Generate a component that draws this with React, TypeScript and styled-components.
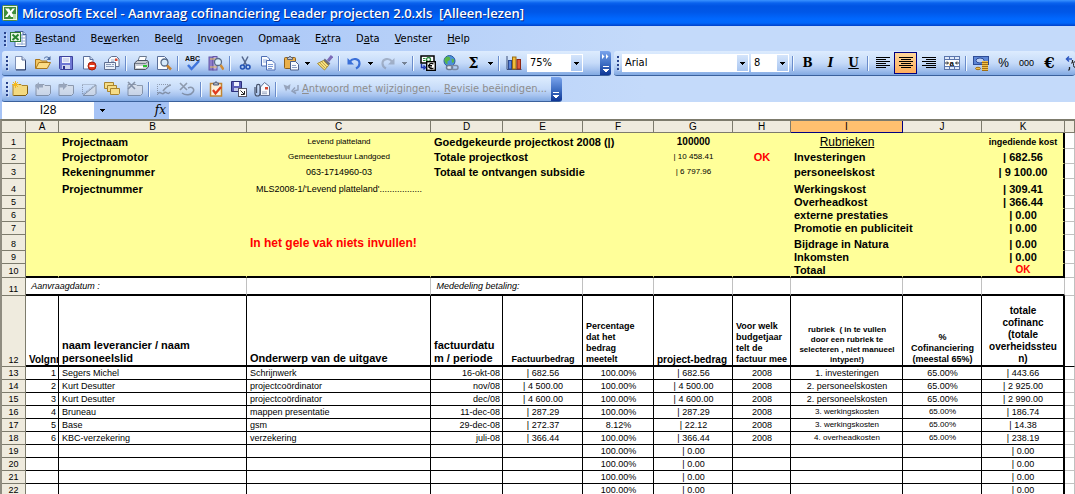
import React from "react";
import styled, { createGlobalStyle, css } from "styled-components";

const UI_FONT = '"DejaVu Sans Condensed", "DejaVu Sans", sans-serif';
const CELL_FONT = '"Liberation Sans", Arial, sans-serif';

const GlobalStyle = createGlobalStyle`
  *, *::before, *::after { box-sizing: border-box; }
  body { margin: 0; background: #fff; overflow: hidden; }
  button, input, select { font: inherit; color: inherit; margin: 0; border: 0; border-radius: 0; }
`;

/* ---------- window chrome ---------- */

const Window = styled.div`
  display: flex;
  flex-direction: column;
  height: 100vh;
  overflow: hidden;
  background: #fff;
  font-family: ${UI_FONT};
  font-size: 11px;
  color: #000;
`;

const TitleBar = styled.header`
  flex: none;
  display: flex;
  align-items: center;
  gap: 4px;
  height: 26px;
  padding: 0 2px;
  background: linear-gradient(#3a93ff 0, #0a62ee 3px, #0054e3 6px, #0057e8 12px, #0068ff 19px, #0066fa 23px, #0040c8 26px);
`;

const Title = styled.h1`
  margin: 0;
  font: 600 13px/20px "Open Sans", "Noto Sans", sans-serif;
  color: #fff;
  text-shadow: 1px 1px 0 #0b2a86;
  white-space: pre;
`;

const Chrome = styled.div`
  flex: none;
  background: linear-gradient(90deg, #9ebef5, #c4dafa 60%);
`;

const MenuBar = styled.nav`
  display: flex;
  align-items: center;
  height: 25px;
  padding-left: 4px;
`;

const MenuList = styled.ul`
  display: flex;
  gap: 15px;
  margin: 0;
  padding: 0 0 0 8px;
  list-style: none;
`;

const MenuButton = styled.button`
  padding: 0;
  background: none;
  line-height: 16px;
`;

const Grip = styled.span`
  flex: none;
  width: 2px;
  height: 14px;
  background: repeating-linear-gradient(#27418b 0 2px, transparent 2px 4px);
  box-shadow: 1px 1px 0 #ffffff60;
`;

const ToolRows = styled.div`
  display: flex;
  flex-direction: column;
  gap: 1px;
`;

const ToolRow = styled.div`
  display: flex;
  gap: 3px;
  height: 25px;
  padding-left: 2px;
`;

const Bar = styled.div<{ $grow?: boolean }>`
  flex: ${(p) => (p.$grow ? "1 0 0" : "none")};
  display: flex;
  align-items: center;
  min-width: 0;
  overflow: hidden;
  padding-left: ${(p) => (p.$grow ? 3 : 4)}px;
  border-bottom: 1px solid #3b619c;
  border-radius: 3px;
  background: linear-gradient(#ddecfe, #c6dbf9 50%, #a9c5f0 75%, #81a9e2);
`;

const ToolButton = styled.button<{ $active?: boolean; $muted?: boolean }>`
  flex: none;
  display: flex;
  align-items: center;
  justify-content: center;
  width: 23px;
  height: 22px;
  padding: 0;
  background: none;
  opacity: ${(p) => (p.$muted ? 0.6 : 1)};
  filter: ${(p) => (p.$muted ? "grayscale(0.5)" : "none")};
  ${(p) =>
    p.$active &&
    css`
      border: 1px solid #000080;
      background: linear-gradient(#ffd79b, #ffad5c);
    `}
`;

const Glyph = styled.span<{ $size: number; $italic?: boolean; $underline?: boolean; $sans?: boolean }>`
  font: ${(p) => (p.$italic ? "italic " : "")}${(p) => (p.$sans ? "normal" : "bold")} ${(p) => p.$size}px/16px
    ${(p) => (p.$sans ? '"Liberation Sans", sans-serif' : '"DejaVu Serif", "Liberation Serif", serif')};
  text-decoration: ${(p) => (p.$underline ? "underline" : "none")};
`;

const TextButton = styled.button`
  flex: none;
  padding: 0;
  background: none;
  color: #8d8d8d;
  line-height: 16px;
`;

const DropButton = styled.button<{ $muted?: boolean }>`
  flex: none;
  display: flex;
  align-items: center;
  justify-content: center;
  width: 11px;
  height: 20px;
  padding: 0;
  background: none;
  opacity: ${(p) => (p.$muted ? 0.4 : 1)};
`;

const Separator = styled.span`
  flex: none;
  width: 2px;
  height: 15px;
  margin: 0 2px;
  border-left: 1px solid #6a8ccb;
  border-right: 1px solid #f1f9ff;
`;

const ComboBox = styled.label<{ $width: number; $end?: boolean }>`
  flex: none;
  display: flex;
  width: ${(p) => p.$width}px;
  height: 18px;
  margin: 0 ${(p) => (p.$end ? 1 : 2)}px 0 0;
  border: 1px solid #fff;
  background: #fff;
`;

const ComboSelect = styled.select`
  flex: 1;
  min-width: 0;
  padding: 0 2px;
  appearance: none;
  background: #fff;
  line-height: 16px;
  outline: 0;
`;

const ComboArrow = styled.span`
  display: flex;
  align-items: center;
  justify-content: center;
  width: 11px;
  background: linear-gradient(#d5e5fb, #a9c6f1);
`;

const Overflow = styled.button`
  align-self: stretch;
  flex: none;
  display: flex;
  flex-direction: column;
  align-items: center;
  justify-content: flex-end;
  gap: 7px;
  width: 11px;
  margin-bottom: -1px;
  padding: 0 0 3px;
  background: linear-gradient(#7aa4ec, #3f6fc4 50%, #0a3191);
`;

const Gap = styled.span<{ $w: number }>`
  flex: none;
  width: ${(p) => p.$w}px;
`;

const FormulaBar = styled.div`
  flex: none;
  display: flex;
  height: 17px;
  padding-left: 2px;
  background: #a6c3f5;
`;

const NameBox = styled.input`
  width: 92px;
  padding: 0 2px;
  background: #fff;
  text-align: center;
  font: 12px/17px ${CELL_FONT};
  outline: 0;
`;

const FormulaTools = styled.div`
  display: flex;
  align-items: center;
  justify-content: space-between;
  width: 75px;
  padding: 0 3px;
`;

const FormulaInput = styled.input`
  flex: 1;
  min-width: 0;
  padding: 0 3px;
  background: #fff;
  outline: 0;
`;

const FxButton = styled.button`
  padding: 0;
  background: none;
  font: italic 12px/15px "DejaVu Serif", "Liberation Serif", serif;
`;

/* ---------- sheet ---------- */

const LINE = "#7d7b6c";
const HEAD = "#efebde";
const YELLOW = "#ffff99";
const GRID = "#c0c0c0";

const SheetArea = styled.main`
  flex: 1;
  min-height: 0;
  overflow: hidden;
  border-top: 2px solid ${LINE};
  border-left: 2px solid #8f8c80;
  font-family: ${CELL_FONT};
`;

const Sheet = styled.table`
  width: 100%;
  min-width: 1073px;
  table-layout: fixed;
  border-collapse: separate;
  border-spacing: 0;
`;

const Row = styled.tr<{ $h: number }>`
  height: ${(p) => p.$h}px;
`;

const ColHead = styled.th<{ $selected?: boolean }>`
  padding: 0;
  border-right: 1px solid ${(p) => (p.$selected ? "#000080" : LINE)};
  border-bottom: 1px solid ${(p) => (p.$selected ? "#000080" : LINE)};
  background: ${(p) => (p.$selected ? "#ffc06f" : HEAD)};
  font-size: 10px;
  line-height: 11px;
  font-weight: normal;
`;

const RowHead = styled.th`
  padding: 0;
  border-right: 1px solid ${LINE};
  border-bottom: 1px solid ${LINE};
  background: ${HEAD};
  font-size: 9px;
  line-height: 12px;
  font-weight: normal;
  vertical-align: bottom;
`;

interface CellStyle {
  $align?: "left" | "center" | "right";
  $size?: number;
  $lh?: number;
  $bold?: boolean;
  $italic?: boolean;
  $underline?: boolean;
  $red?: boolean;
  $bg?: string;
  $right?: string;
  $bottom?: string;
  $clip?: boolean;
  $middle?: boolean;
}

const Cell = styled.td<CellStyle>`
  padding: 0 2px 0 3px;
  border-right: ${(p) => p.$right ?? `1px solid ${GRID}`};
  border-bottom: ${(p) => p.$bottom ?? `1px solid ${GRID}`};
  background: ${(p) => p.$bg ?? "#fff"};
  color: ${(p) => (p.$red ? "#f00" : "#000")};
  font-size: ${(p) => p.$size ?? 9}px;
  line-height: ${(p) => p.$lh ?? 12}px;
  font-weight: ${(p) => (p.$bold ? "bold" : "normal")};
  font-style: ${(p) => (p.$italic ? "italic" : "normal")};
  text-decoration: ${(p) => (p.$underline ? "underline" : "none")};
  text-align: ${(p) => p.$align ?? "left"};
  vertical-align: ${(p) => (p.$middle ? "middle" : "bottom")};
  white-space: pre;
  overflow: ${(p) => (p.$clip ? "hidden" : "visible")};
`;

/* ---------- icons ---------- */

const Svg = ({ children, w = 16, h = 16 }: { children: React.ReactNode; w?: number; h?: number }) => (
  <svg width={w} height={h} viewBox={`0 0 ${w} ${h}`} aria-hidden="true">
    {children}
  </svg>
);

const Arrow = ({ color = "#000" }: { color?: string }) => (
  <svg width="5" height="3" viewBox="0 0 5 3" aria-hidden="true" shapeRendering="crispEdges">
    <path d="M0 0h5v1H4v1H3v1H2V2H1V1H0z" fill={color} />
  </svg>
);

const noteBody = (fill: string, edge: string) => (
  <path d="M1 3.500h8l1 1h5.500v8l-2 2H1z" fill={fill} stroke={edge} />
);

const icons: Record<string, React.ReactNode> = {
  excel: (
    <>
      <rect x=".5" y=".5" width="15" height="15" rx="1" fill="#eef6e6" stroke="#4d8a45" />
      <rect x="2" y="2" width="12" height="12" fill="#3e8c3a" />
      <path d="M3 3.500h4l1.500 2.500L10.500 3.500H13L9.700 7.700 13 12H9L7.500 9.500 5.500 12H3l3.300-4.300z" fill="#fff" />
      <path d="M11 9h3v5h-3z" fill="#b9dba8" />
    </>
  ),
  book: (
    <>
      <path d="M5 1.500h8l3 3V16.500H5z" fill="#fff" stroke="#44629c" />
      <path d="M10 5h5M10 8h5M10 11h5M7 14h8M12 4v11" stroke="#8ea9d6" />
      <path d="M13 1.500v3h3" fill="#cfdff7" stroke="#44629c" />
      <rect x=".5" y="2.500" width="10" height="9" fill="#e9f5e4" stroke="#2f7a33" />
      <path d="M2.500 4.500l6 5.500M8.500 4.500l-6 5.500" stroke="#27832f" strokeWidth="2" />
    </>
  ),
  page: (
    <>
      <path d="M3.500 1.500h6.500l3.500 3.500v9.500h-10z" fill="#fbfdff" stroke="#7d90b8" />
      <path d="M10 1.500V5h3.500" fill="#cdd9ef" stroke="#5a6f9a" />
      <path d="M13.500 5.500v9.500h-9.500" stroke="#2c3d66" fill="none" />
    </>
  ),
  open: (
    <>
      <path d="M.5 13.500v-9h4.500l1.500 1.500h5.500v3" fill="#f2c765" stroke="#a8761d" />
      <path d="M.8 13.500l3-6h11.700l-3.300 6z" fill="#fbdc86" stroke="#a8761d" />
      <path d="M9 3.500c1.500-2 3.500-2 5-.5" fill="none" stroke="#4c6a9e" />
      <path d="M15.500 1v4h-4z" fill="#4c6a9e" />
    </>
  ),
  save: (
    <>
      <path d="M1.500 1.500h13v13h-12l-1-1z" fill="#6f78d4" stroke="#3d429c" />
      <rect x="4" y="2" width="8" height="6" fill="#f1f4fd" />
      <path d="M5 4h6M5 6h6" stroke="#b3bbdf" />
      <rect x="4" y="10" width="8" height="4" fill="#cdd3ee" />
      <rect x="5" y="11" width="2" height="3" fill="#2b2f8a" />
    </>
  ),
  permission: (
    <>
      <path d="M2.500 1.500h6.500l3 3v9.500h-9.500z" fill="#fbfdff" stroke="#5a6f9a" />
      <path d="M9 1.500v3h3" fill="#cdd9ef" stroke="#5a6f9a" />
      <circle cx="11" cy="11" r="4" fill="#e2391b" stroke="#a51e0c" />
      <rect x="8.500" y="10" width="5" height="2" fill="#fff" />
    </>
  ),
  mail: (
    <>
      <path d="M4.500 8V4l3-2.500h5l2.500 2.500v7.500h-3" fill="#f7faff" stroke="#5f6f92" />
      <path d="M7 5h4M7 6.500h3" stroke="#a9b6cf" />
      <rect x="11" y="3.500" width="2.500" height="2.500" fill="#d8452c" />
      <path d="M.5 7.500h11v7H.5z" fill="#e9f0fb" stroke="#5f6f92" />
      <path d="M2 9.500h5M2 11.500h8M8 9.500h2" stroke="#8a9ab8" />
    </>
  ),
  print: (
    <>
      <path d="M5 6l1.500-4.500h7L12 6z" fill="#fff" stroke="#6b7a90" />
      <path d="M1.500 8l3-2.500h10l1 1.500v5l-3 2.500h-11z" fill="#c9ccd3" stroke="#4d5563" />
      <path d="M2 8.500h10.500l2.500-2" stroke="#747c8a" fill="none" />
      <path d="M3 12h7" stroke="#fff" strokeWidth="2" />
      <rect x="10" y="10" width="4" height="2" fill="#29c52f" />
    </>
  ),
  preview: (
    <>
      <path d="M1.500 1.500h7l3 3v10h-10z" fill="#fbfdff" stroke="#5a6f9a" />
      <circle cx="8.500" cy="7.500" r="3.500" fill="#d5e9fb" stroke="#556987" strokeWidth="1.300" />
      <path d="M11 10.500l4 4" stroke="#c9822c" strokeWidth="2.500" />
    </>
  ),
  spelling: (
    <>
      <text x="0" y="6" fontSize="7" fontWeight="bold" fontFamily="Liberation Sans, sans-serif" fill="#111">
        ABC
      </text>
      <path d="M3 10l3.500 4L14 6" fill="none" stroke="#3f74dc" strokeWidth="2.500" />
    </>
  ),
  research: (
    <>
      <rect x="1" y="2" width="4" height="13" fill="#8d7cc9" stroke="#6556a6" />
      <rect x="5" y="1.500" width="4" height="13.500" fill="#b9aade" stroke="#6556a6" />
      <path d="M2 4h7M2 12h7" stroke="#e9c35f" />
      <circle cx="10" cy="7" r="3.500" fill="#dceefc" stroke="#596d88" strokeWidth="1.300" />
      <path d="M12.500 10l3 4.500" stroke="#d08d35" strokeWidth="2.500" />
    </>
  ),
  cut: (
    <>
      <path d="M5 1.500L9.500 10M11 1.500L6.500 10" stroke="#54668c" strokeWidth="1.500" />
      <circle cx="5.500" cy="12" r="2" fill="none" stroke="#2453b4" strokeWidth="1.600" />
      <circle cx="11" cy="12" r="2" fill="none" stroke="#2453b4" strokeWidth="1.600" />
    </>
  ),
  copy: (
    <>
      <path d="M1.500 1.500h5.500l2.500 2.500v7h-8z" fill="#fafcff" stroke="#4d6db3" />
      <path d="M3 5h4M3 7h4" stroke="#8fa9dd" />
      <path d="M6.500 5.500h5.500l3 3v6.500h-8.500z" fill="#fafcff" stroke="#4d6db3" />
      <path d="M8 9.500h5M8 11.500h5M8 13.500h4" stroke="#7c99d4" />
    </>
  ),
  paste: (
    <>
      <rect x="1.500" y="2.500" width="11" height="11" rx="1" fill="#eab04a" stroke="#8c5f1b" />
      <path d="M4.500 4.500v-2h1.500l1-1.500 1 1.500h1.500v2z" fill="#c6cbd5" stroke="#5b6170" />
      <path d="M7.500 6.500h5l3 3v5.500h-8z" fill="#f7faff" stroke="#4a5e8a" />
      <path d="M9 10.500h4M9 12.500h5" stroke="#8b9dc4" />
    </>
  ),
  painter: (
    <>
      <path d="M15 1l-4 5" stroke="#7d6bb8" strokeWidth="3" />
      <path d="M7 4.500l5.500 5" stroke="#6d6d80" strokeWidth="2.500" />
      <path d="M6.500 5.500l5 5-4 4.500-7-6.500z" fill="#f5df82" stroke="#a58a34" />
      <path d="M3 8l5 5M5 7l5 5" stroke="#c3a547" />
    </>
  ),
  undo: (
    <>
      <path d="M4 6.500c3-4 9.500-3 9.500 2 0 2.500-1.500 4-3.500 5" fill="none" stroke="#3a6fd8" strokeWidth="2.200" />
      <path d="M1.500 3v6.500H8z" fill="#3a6fd8" />
    </>
  ),
  redo: (
    <>
      <path d="M12 6.500c-3-4-9.500-3-9.500 2 0 2.500 1.500 4 3.500 5" fill="none" stroke="#7d93bd" strokeWidth="2.200" />
      <path d="M14.500 3v6.500H8z" fill="#7d93bd" />
    </>
  ),
  euroConvert: (
    <>
      <rect x="1" y="1" width="13" height="7" fill="#fff" stroke="#000" strokeWidth="1.500" />
      <path d="M3 3.500h2.500M3 5.500h2.500" stroke="#2e8b3d" />
      <circle cx="8.500" cy="4.500" r="2" fill="none" stroke="#2e8b3d" strokeWidth="1.300" />
      <rect x="6.700" y="6.700" width="8.600" height="8.600" fill="#fff" stroke="#000" strokeWidth="1.400" />
      <path d="M13.500 9c-3-1.500-4.500.3-4.500 2s1.500 3.500 4.500 2M8 10.500h4M8 12h4" fill="none" stroke="#000" strokeWidth="1.200" />
      <path d="M1.500 9v3.500h3M3.500 10.500l2 2-2 2" fill="none" stroke="#1c35b0" strokeWidth="1.400" />
    </>
  ),
  hyperlink: (
    <>
      <circle cx="6.500" cy="6" r="5.500" fill="#4c90dc" stroke="#2b5b9e" />
      <path d="M3 2c3-1.500 5 .5 4 2.500S4 5 4.500 8 2 8 1.500 6 2 3 3 2zM8.500 4c2-1 3 1 2.500 3l-2 1z" fill="#57b648" />
      <rect x="3.500" y="10.500" width="6" height="4" rx="2" fill="#e3e9f3" stroke="#6c7b94" strokeWidth="1.500" />
      <rect x="8.500" y="10.500" width="6.500" height="4" rx="2" fill="none" stroke="#7b8aa5" strokeWidth="1.500" />
    </>
  ),
  chart: (
    <>
      <path d="M1 1v13.500h14.500" stroke="#3c4e78" fill="none" />
      <rect x="2.500" y="5.500" width="3" height="8.500" fill="#5b85d8" stroke="#2c4a92" />
      <rect x="6.500" y="2" width="3.500" height="12" fill="#f0bd3d" stroke="#9a6c12" />
      <rect x="11" y="4.500" width="3.500" height="9.500" fill="#e0583a" stroke="#8e2612" />
    </>
  ),
  merge: (
    <>
      <rect x=".5" y="1.500" width="15" height="13" fill="#dfe9fa" stroke="#5a75ab" />
      <path d="M.5 4.500h15M.5 11.500h15M5.500 1.500v3M10.500 1.500v3M5.500 11.500v3M10.500 11.500v3" stroke="#5a75ab" />
      <rect x="1" y="5" width="14" height="6" fill="#fff" />
      <path d="M1 8h3M15 8h-3M3 6.500L4.500 8 3 9.500M13 6.500L11.500 8 13 9.500" stroke="#222" fill="none" />
      <text x="5.500" y="10.500" fontSize="8" fontWeight="bold" fontFamily="Liberation Sans, sans-serif">
        a
      </text>
    </>
  ),
  currency: (
    <>
      <rect x=".5" y="1.500" width="15" height="8" fill="#5d86d6" stroke="#2d4c97" />
      <ellipse cx="7" cy="5.500" rx="4" ry="2.500" fill="#bcd0f3" stroke="#2d4c97" />
      <path d="M9 6h6v9.500H9z" fill="#f2c04b" />
      <path d="M9 7.500h6M9 9.500h6M9 11.500h6M9 13.500h6M9 15.500h6" stroke="#a16f13" />
      <ellipse cx="5" cy="13.500" rx="2.500" ry="1.200" fill="#f2c04b" stroke="#a16f13" />
    </>
  ),
  note: (
    <>
      {noteBody("#f3d980", "#a8842f")}
      <path d="M2 14.500h11.500l2-2v-7" fill="none" stroke="#7a5c18" />
      <path d="M3.500 0v7M0 3.500h7M1 1l5 5M6 1L1 6" stroke="#f4b81d" />
    </>
  ),
  notePrev: (
    <>
      {noteBody("#d8dde8", "#5c6b8a")}
      <path d="M0 5l4-4v2.500h4v3H4V9z" fill="#6f82a8" />
    </>
  ),
  noteNext: (
    <>
      {noteBody("#d8dde8", "#5c6b8a")}
      <path d="M9 5L5 1v2.500H1v3h4V9z" fill="#6f82a8" />
    </>
  ),
  noteShow: (
    <>
      <path d="M1.500 3.500h13L1.500 13.500z" fill="none" stroke="#5c6b8a" strokeDasharray="1 1" />
      <path d="M15 4v8.500l-2 2H2z" fill="#d8dde8" stroke="#5c6b8a" />
    </>
  ),
  notesAll: (
    <>
      <path d="M.5 1.500h9v5l-1 1h-8z" fill="#f6dd87" stroke="#a8842f" />
      <path d="M3.500 4.500h9v5l-1 1h-8z" fill="#f6dd87" stroke="#a8842f" />
      <path d="M6.500 7.500h9v5l-1 1h-8z" fill="#f6dd87" stroke="#a8842f" />
    </>
  ),
  noteDelete: (
    <>
      {noteBody("#d8dde8", "#5c6b8a")}
      <path d="M1 1l7 7M8 1L1 8" stroke="#4d5f86" strokeWidth="1.600" />
    </>
  ),
  ink: (
    <>
      <path d="M1.500 14V3.500h12" fill="none" stroke="#5c6b8a" strokeDasharray="1 1" />
      <path d="M15 4c-2 0-6 3-8 6M2 13c2-4 4 2 6-1s4 3 6-1" fill="none" stroke="#5c6b8a" strokeWidth="1.500" />
    </>
  ),
  inkDelete: (
    <>
      <path d="M1 2l7 7M8 2L1 9" stroke="#5c6b8a" strokeWidth="1.600" />
      <path d="M9 7c4-2 7 1 5 4s-7 4-11 1" fill="none" stroke="#5c6b8a" strokeWidth="1.500" />
    </>
  ),
  task: (
    <>
      <rect x="2.500" y="2.500" width="11" height="12.500" fill="#fbf1dc" stroke="#c08432" strokeWidth="1.500" />
      <path d="M5.500 4V2h1.500l1-1.500L9 2h1.500v2z" fill="#aeb6c6" stroke="#545f78" />
      <path d="M5 9l2.500 3.500L13 6" fill="none" stroke="#e03a1c" strokeWidth="2.300" />
    </>
  ),
  saveVersion: (
    <>
      <path d="M.5.5h10v10H.5z" fill="#5b5fb8" stroke="#2b2f7a" />
      <rect x="3" y="1" width="5" height="4" fill="#eef1fc" />
      <rect x="3" y="7" width="5" height="3" fill="#c4caea" />
      <rect x="7.500" y="7.500" width="8" height="8" fill="#fff" stroke="#556" />
      <path d="M9.500 9.500l3.500 3.500M13.500 10v3.500H10" stroke="#222" fill="none" />
    </>
  ),
  attach: (
    <>
      <path d="M6.500 6l4-4.500 5 4v9h-9z" fill="#f7faff" stroke="#5f6f92" />
      <rect x="11" y="6" width="3" height="2.500" fill="#d8452c" />
      <path d="M8 11h5M8 12.700h5" stroke="#9aa8c2" />
      <path d="M1 6v6.500a2.500 2.500 0 005 0V5a1.700 1.700 0 00-3.400 0v7" fill="none" stroke="#47536b" strokeWidth="1.200" />
    </>
  ),
  reply: (
    <>
      <path d="M.5 3.500l4 1.500 3-2-1 6-2-1.500-1.500 3z" fill="#6c7ea6" />
      <path d="M15 4v5l-4 1M12 6.500L9 10l4 2.500" fill="none" stroke="#6c7ea6" strokeWidth="1.500" />
    </>
  ),
  decimals: (
    <>
      <path d="M1 4h6M4 1.500L1.500 4 4 6.500" fill="none" stroke="#2c57c0" strokeWidth="1.500" />
      <path d="M7.500 5v2l-1 1.500M4.500 12v2l-1 1.500" fill="none" stroke="#222" strokeWidth="1.300" />
      <rect x="8.500" y="6.500" width="4" height="6" rx="2" fill="none" stroke="#222" />
    </>
  ),
};

const Tool = ({ icon, label, muted }: { icon: string; label: string; muted?: boolean }) => (
  <ToolButton type="button" aria-label={label} $muted={muted}>
    <Svg>{icons[icon]}</Svg>
  </ToolButton>
);

const Lines = ({ widths, align }: { widths: number[]; align: "left" | "center" | "right" }) => (
  <svg width="14" height="12" viewBox="0 0 14 12" aria-hidden="true" shapeRendering="crispEdges">
    {widths.map((w, i) => (
      <rect
        key={i}
        x={align === "left" ? 0 : align === "right" ? 14 - w : (14 - w) / 2}
        y={i * 2}
        width={w}
        height="1"
        fill="#000"
      />
    ))}
  </svg>
);

const DropArrow = ({ label, muted }: { label: string; muted?: boolean }) => (
  <DropButton type="button" aria-label={label} $muted={muted}>
    <Arrow />
  </DropButton>
);

const Combo = ({ label, value, width, end }: { label: string; value: string; width: number; end?: boolean }) => (
  <ComboBox $width={width} $end={end}>
    <ComboSelect aria-label={label} defaultValue={value}>
      <option>{value}</option>
    </ComboSelect>
    <ComboArrow>
      <Arrow />
    </ComboArrow>
  </ComboBox>
);

const OverflowButton = ({ more }: { more?: boolean }) => (
  <Overflow type="button" aria-label="Werkbalkopties">
    {more && (
      <svg width="7" height="5" viewBox="0 0 7 5" aria-hidden="true">
        <path d="M0 0l2.500 2.500L0 5zM4 0l2.500 2.500L4 5z" fill="#fff" />
      </svg>
    )}
    <svg width="6" height="7" viewBox="0 0 6 7" aria-hidden="true" shapeRendering="crispEdges">
      <path d="M0 0h6v1H0zM0 3h6v1H5v1H4v1H2V5H1V4H0z" fill="#fff" />
    </svg>
  </Overflow>
);

/* ---------- data ---------- */

const menus: [string, string, string][] = [
  ["", "B", "estand"],
  ["Be", "w", "erken"],
  ["Beel", "d", ""],
  ["", "I", "nvoegen"],
  ["Opmaa", "k", ""],
  ["E", "x", "tra"],
  ["D", "a", "ta"],
  ["", "V", "enster"],
  ["", "H", "elp"],
];

const columns = ["A", "B", "C", "D", "E", "F", "G", "H", "I", "J", "K"];
const colWidths = [24, 33, 188, 184, 72, 80, 71, 79, 58, 112, 79, 83];

interface SummaryRow {
  h: number;
  label?: string;
  value?: string;
  valueSize?: number;
  total?: string;
  amount?: string;
  amountBold?: boolean;
  ok?: string;
  rubric: string;
  cost: string;
}

const summary: SummaryRow[] = [
  { h: 16, label: "Projectnaam", value: "Levend platteland", valueSize: 8, total: "Goedgekeurde projectkost 2008 (|)", amount: "100000", amountBold: true, rubric: "Rubrieken", cost: "ingediende kost" },
  { h: 15, label: "Projectpromotor", value: "Gemeentebestuur Landgoed", valueSize: 8, total: "Totale projectkost", amount: "| 10 458.41", ok: "OK", rubric: "Investeringen", cost: "| 682.56" },
  { h: 15, label: "Rekeningnummer", value: "063-1714960-03", total: "Totaal te ontvangen subsidie", amount: "| 6 797.96", rubric: "personeelskost", cost: "| 9 100.00" },
  { h: 17, label: "Projectnummer", value: "MLS2008-1/'Levend platteland'.................", rubric: "Werkingskost", cost: "| 309.41" },
  { h: 13, rubric: "Overheadkost", cost: "| 366.44" },
  { h: 13, rubric: "externe prestaties", cost: "| 0.00" },
  { h: 13, rubric: "Promotie en publiciteit", cost: "| 0.00" },
  { h: 16, value: "In het gele vak niets invullen!", rubric: "Bijdrage in Natura", cost: "| 0.00" },
  { h: 13, rubric: "Inkomsten", cost: "| 0.00" },
  { h: 14, rubric: "Totaal", cost: "OK" },
];

const headings: { text: string; size: number; lh: number; center?: boolean }[] = [
  { text: "Volgnr", size: 10, lh: 11 },
  { text: "naam leverancier / naam\npersoneelslid", size: 11, lh: 13 },
  { text: "Onderwerp van de uitgave", size: 11, lh: 13 },
  { text: "factuurdatu\nm / periode", size: 11, lh: 13 },
  { text: "Factuurbedrag", size: 9, lh: 11, center: true },
  { text: "Percentage\ndat het\nbedrag\nmeetelt", size: 9, lh: 11 },
  { text: "project-bedrag", size: 10, lh: 11 },
  { text: "Voor welk\nbudgetjaar\ntelt de\nfactuur mee", size: 9, lh: 11 },
  { text: "rubriek  ( in te vullen\ndoor een rubriek te\nselecteren , niet manueel\nintypen!)", size: 8, lh: 10, center: true },
  { text: "%\nCofinanciering\n(meestal 65%)", size: 9, lh: 11, center: true },
  { text: "totale\ncofinanc\n(totale\noverheidssteu\nn)", size: 10, lh: 12, center: true },
];

const entries: string[][] = [
  ["1", "Segers Michel", "Schrijnwerk", "16-okt-08", "| 682.56", "100.00%", "| 682.56", "2008", "1. investeringen", "65.00%", "| 443.66"],
  ["2", "Kurt Desutter", "projectcoördinator", "nov/08", "| 4 500.00", "100.00%", "| 4 500.00", "2008", "2. personeelskosten", "65.00%", "| 2 925.00"],
  ["3", "Kurt Desutter", "projectcoördinator", "dec/08", "| 4 600.00", "100.00%", "| 4 600.00", "2008", "2. personeelskosten", "65.00%", "| 2 990.00"],
  ["4", "Bruneau", "mappen presentatie", "11-dec-08", "| 287.29", "100.00%", "| 287.29", "2008", "3. werkingskosten", "65.00%", "| 186.74"],
  ["5", "Base", "gsm", "29-dec-08", "| 272.37", "8.12%", "| 22.12", "2008", "3. werkingskosten", "65.00%", "| 14.38"],
  ["6", "KBC-verzekering", "verzekering", "juli-08", "| 366.44", "100.00%", "| 366.44", "2008", "4. overheadkosten", "65.00%", "| 238.19"],
  ...Array.from({ length: 4 }, () => ["", "", "", "", "", "100.00%", "| 0.00", "", "", "", "| 0.00"]),
];

const BLACK = "1px solid #000";
const THICK = "2px solid #000";
const aligns: CellStyle["$align"][] = ["right", "left", "left", "right", "center", "center", "center", "center", "center", "center", "center"];

const SummaryLine = ({ row, index }: { row: SummaryRow; index: number }) => {
  const bottom = index === summary.length - 1 ? THICK : `1px solid ${YELLOW}`;
  const right = `1px solid ${YELLOW}`;
  const base = { $bg: YELLOW, $right: right, $bottom: bottom };
  const notice = index === 7;
  const title = index === 0;
  return (
    <Row $h={row.h}>
      <RowHead scope="row">{index + 1}</RowHead>
      <Cell {...base} />
      <Cell {...base} $bold $size={11}>{row.label}</Cell>
      <Cell {...base} $align={notice ? "left" : "center"} $size={notice ? 12 : row.valueSize} $bold={notice} $red={notice} $middle={notice}>
        {row.value}
      </Cell>
      <Cell {...base} colSpan={3} $bold $size={11}>{row.total}</Cell>
      <Cell {...base} $align="center" $size={row.amountBold ? 10 : 8} $bold={row.amountBold}>{row.amount}</Cell>
      <Cell {...base} $align="center" $bold $red $size={11}>{row.ok}</Cell>
      <Cell {...base} $align={title ? "center" : "left"} $underline={title} $bold={!title} $size={title ? 12 : 11}>{row.rubric}</Cell>
      <Cell {...base} />
      <Cell {...base} $right={THICK} $align="center" $bold $size={title ? 9 : index === 9 ? 10 : 11} $red={index === 9}>
        {row.cost}
      </Cell>
      <Cell />
    </Row>
  );
};

export default function App() {
  return (
    <Window>
      <GlobalStyle />
      <TitleBar>
        <Svg>{icons.excel}</Svg>
        <Title>{"Microsoft Excel - Aanvraag cofinanciering Leader projecten 2.0.xls  [Alleen-lezen]"}</Title>
      </TitleBar>

      <Chrome>
        <MenuBar aria-label="Menu">
          <Grip />
          <Gap $w={4} />
          <Svg w={17} h={17}>{icons.book}</Svg>
          <MenuList>
            {menus.map(([before, key, after]) => (
              <li key={before + key + after}>
                <MenuButton type="button">
                  {before}
                  <u>{key}</u>
                  {after}
                </MenuButton>
              </li>
            ))}
          </MenuList>
        </MenuBar>

        <ToolRows>
          <ToolRow>
            <Bar role="toolbar" aria-label="Standaard">
              <Grip />
              <Tool icon="page" label="Nieuw" />
              <Tool icon="open" label="Openen" />
              <Tool icon="save" label="Opslaan" />
              <Tool icon="permission" label="Machtiging" />
              <Tool icon="mail" label="E-mail" />
              <Separator />
              <Tool icon="print" label="Afdrukken" />
              <Tool icon="preview" label="Afdrukvoorbeeld" />
              <Separator />
              <Tool icon="spelling" label="Spelling" />
              <Tool icon="research" label="Onderzoek" />
              <Separator />
              <Tool icon="cut" label="Knippen" />
              <Tool icon="copy" label="Kopiëren" />
              <Tool icon="paste" label="Plakken" />
              <DropArrow label="Plakopties" />
              <Tool icon="painter" label="Opmaak kopiëren" />
              <Separator />
              <Tool icon="undo" label="Ongedaan maken" />
              <DropArrow label="Lijst ongedaan maken" />
              <Tool icon="redo" label="Opnieuw" muted />
              <DropArrow label="Lijst opnieuw" muted />
              <Separator />
              <Tool icon="euroConvert" label="Euroconversie" />
              <Tool icon="hyperlink" label="Hyperlink" />
              <ToolButton type="button" aria-label="AutoSom">
                <Glyph $size={14}>Σ</Glyph>
              </ToolButton>
              <DropArrow label="Somopties" />
              <Separator />
              <Tool icon="chart" label="Grafiek" />
              <Gap $w={2} />
              <Combo label="In- en uitzoomen" value="75%" width={56} />
              <Gap $w={15} />
              <OverflowButton more />
            </Bar>
            <Bar $grow role="toolbar" aria-label="Opmaak">
              <Grip />
              <Gap $w={3} />
              <Combo label="Lettertype" value="Arial" width={127} />
              <Combo label="Tekengrootte" value="8" width={38} end />
              <Separator />
              <ToolButton type="button" aria-label="Vet">
                <Glyph $size={12}>B</Glyph>
              </ToolButton>
              <ToolButton type="button" aria-label="Cursief">
                <Glyph $size={12} $italic>I</Glyph>
              </ToolButton>
              <ToolButton type="button" aria-label="Onderstrepen">
                <Glyph $size={12} $underline>U</Glyph>
              </ToolButton>
              <Separator />
              <ToolButton type="button" aria-label="Links uitlijnen">
                <Lines widths={[14, 10, 14, 10, 14, 10]} align="left" />
              </ToolButton>
              <ToolButton type="button" aria-label="Centreren" aria-pressed="true" $active>
                <Lines widths={[14, 10, 14, 10, 14, 10]} align="center" />
              </ToolButton>
              <ToolButton type="button" aria-label="Rechts uitlijnen">
                <Lines widths={[14, 10, 14, 10, 14, 10]} align="right" />
              </ToolButton>
              <Tool icon="merge" label="Samenvoegen en centreren" />
              <Separator />
              <Tool icon="currency" label="Valuta" />
              <ToolButton type="button" aria-label="Procentnotatie">
                <Glyph $size={12} $sans>%</Glyph>
              </ToolButton>
              <ToolButton type="button" aria-label="Duizendtalnotatie">
                <Glyph $size={9} $sans>000</Glyph>
              </ToolButton>
              <ToolButton type="button" aria-label="Euro">
                <Glyph $size={15}>€</Glyph>
              </ToolButton>
              <Tool icon="decimals" label="Meer decimalen" />
            </Bar>
          </ToolRow>

          <ToolRow>
            <Bar role="toolbar" aria-label="Reviseren">
              <Grip />
              <Tool icon="note" label="Nieuwe opmerking" />
              <Tool icon="notePrev" label="Vorige opmerking" muted />
              <Tool icon="noteNext" label="Volgende opmerking" muted />
              <Tool icon="noteShow" label="Opmerking weergeven" muted />
              <Tool icon="notesAll" label="Alle opmerkingen weergeven" />
              <Tool icon="noteDelete" label="Opmerking verwijderen" muted />
              <Separator />
              <Tool icon="ink" label="Inktaantekeningen" muted />
              <Tool icon="inkDelete" label="Inkt verwijderen" muted />
              <Separator />
              <Tool icon="task" label="Taak maken" />
              <Tool icon="saveVersion" label="Bestand bijwerken" />
              <Tool icon="attach" label="Verzenden als bijlage" />
              <Separator />
              <Tool icon="reply" label="Antwoord" muted />
              <TextButton type="button">
                <u>A</u>ntwoord met wijzigingen...
              </TextButton>
              <Gap $w={4} />
              <TextButton type="button">
                <u>R</u>evisie beëindigen...
              </TextButton>
              <Gap $w={4} />
              <OverflowButton />
            </Bar>
          </ToolRow>
        </ToolRows>
      </Chrome>

      <FormulaBar>
        <NameBox aria-label="Naamvak" defaultValue="I28" />
        <FormulaTools>
          <DropArrow label="Namen" />
          <FxButton type="button">fx</FxButton>
        </FormulaTools>
        <FormulaInput aria-label="Formule" />
      </FormulaBar>

      <SheetArea>
        <Sheet>
          <colgroup>
            {colWidths.map((w, i) => (
              <col key={i} width={w} />
            ))}
            <col />
          </colgroup>
          <thead>
            <Row $h={12}>
              <ColHead />
              {columns.map((c) => (
                <ColHead key={c} scope="col" $selected={c === "I"}>
                  {c}
                </ColHead>
              ))}
              <ColHead />
            </Row>
          </thead>
          <tbody>
            {summary.map((row, i) => (
              <SummaryLine key={i} row={row} index={i} />
            ))}
            <Row $h={18}>
              <RowHead scope="row">11</RowHead>
              <Cell colSpan={2} $italic $bottom={THICK} $middle>{" Aanvraagdatum :"}</Cell>
              <Cell $bottom={THICK} />
              <Cell colSpan={2} $italic $bottom={THICK} $middle>{" Mededeling betaling:"}</Cell>
              {columns.slice(5).map((c) => (
                <Cell key={c} $bottom={THICK} />
              ))}
              <Cell />
            </Row>
            <Row $h={71}>
              <RowHead scope="row">12</RowHead>
              {headings.map((hd, i) => (
                <Cell
                  key={hd.text}
                  $bold
                  $size={hd.size}
                  $lh={hd.lh}
                  $align={hd.center ? "center" : "left"}
                  $right={i === 10 ? THICK : BLACK}
                  $bottom={THICK}
                  $clip={i === 0}
                >
                  {hd.text}
                </Cell>
              ))}
              <Cell $bottom={BLACK} />
            </Row>
            {entries.map((values, r) => (
              <Row key={r} $h={13}>
                <RowHead scope="row">{r + 13}</RowHead>
                {values.map((v, i) => (
                  <Cell
                    key={i}
                    $align={aligns[i]}
                    $size={r > 2 && (i === 8 || i === 9) ? 8 : 9}
                    $right={i === 10 ? THICK : BLACK}
                    $bottom={BLACK}
                  >
                    {v}
                  </Cell>
                ))}
                <Cell />
              </Row>
            ))}
          </tbody>
        </Sheet>
      </SheetArea>
    </Window>
  );
}
